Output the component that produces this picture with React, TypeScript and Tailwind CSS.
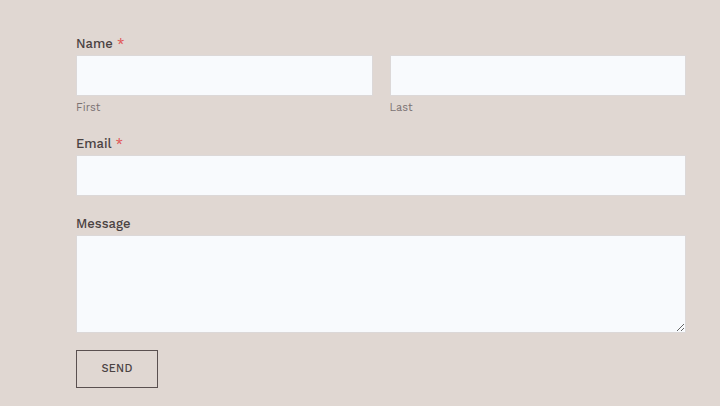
export default function App() {
  const font = { fontFamily: '"Work Sans", Inter, "Open Sans", sans-serif' };
  return (
    <div className="min-h-[406px] w-full bg-[#e0d7d2] text-[#4a4242]" style={font}>
      <form className="ml-[76px] flex w-[610px] flex-col pt-[35px]">
        {/* Name */}
        <label className="mb-[2px] text-[13px] font-medium leading-[18px]">
          Name <span className="text-[#e05a5a]">*</span>
        </label>
        <div className="grid grid-cols-2 gap-[17px]">
          <div className="flex flex-col">
            <input className="h-[41px] border border-[#dcd8d8] bg-[#f8fafd] outline-none" />
            <span className="mt-[5px] text-[11px] leading-[14px] text-[#7a7272]">First</span>
          </div>
          <div className="flex flex-col">
            <input className="h-[41px] border border-[#dcd8d8] bg-[#f8fafd] outline-none" />
            <span className="mt-[5px] text-[11px] leading-[14px] text-[#7a7272]">Last</span>
          </div>
        </div>

        {/* Email */}
        <label className="mb-[2px] mt-[20px] text-[13px] font-medium leading-[18px]">
          Email <span className="text-[#e05a5a]">*</span>
        </label>
        <input className="h-[41px] border border-[#dcd8d8] bg-[#f8fafd] outline-none" />

        {/* Message */}
        <label className="mb-[2px] mt-[19px] text-[13px] font-medium leading-[18px]">Message</label>
        <textarea className="h-[98px] border border-[#dcd8d8] bg-[#f8fafd] outline-none" />

        <div className="mt-[17px]">
          <button
            type="button"
            className="h-[38px] w-[82px] border border-[#5a5050] text-[11px] font-medium tracking-wide text-[#4a4242]"
          >
            SEND
          </button>
        </div>
      </form>
    </div>
  );
}
